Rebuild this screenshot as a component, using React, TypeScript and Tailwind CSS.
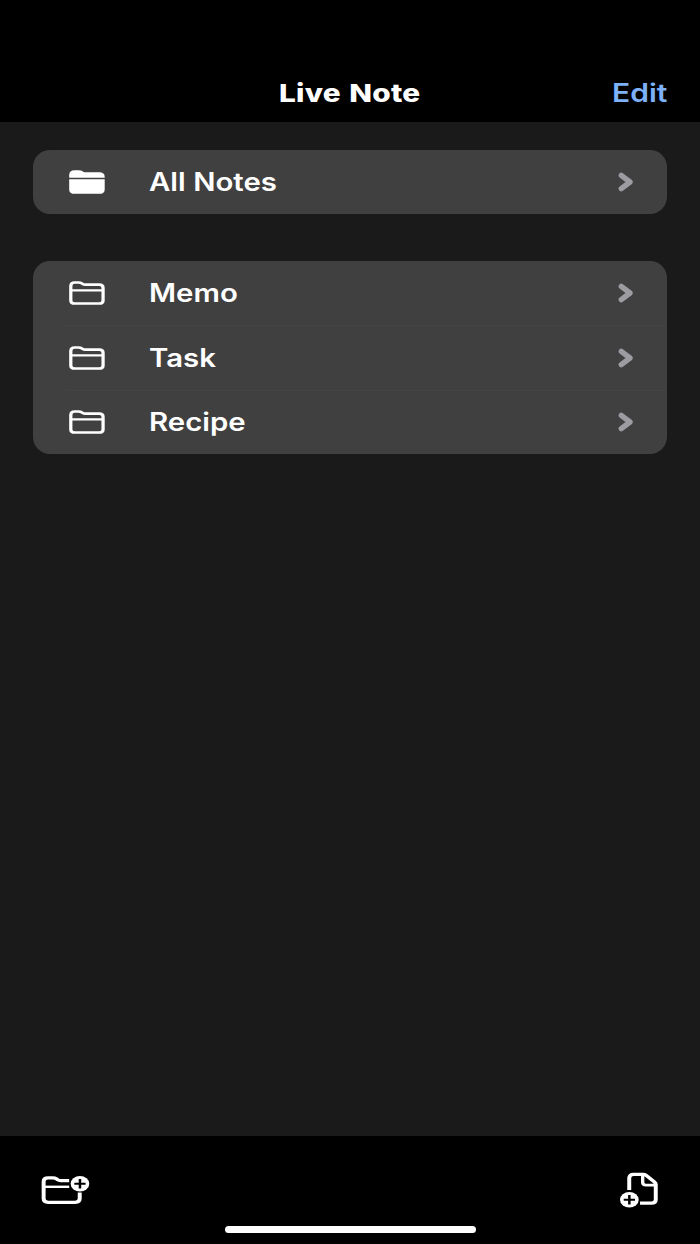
import { ReactNode } from "react"

interface NoteFolder {
    name: string
    filled?: boolean
}

const allNotes: NoteFolder[] = [{ name: "All Notes", filled: true }]
const folders: NoteFolder[] = [{ name: "Memo" }, { name: "Task" }, { name: "Recipe" }]

const FOLDER_PATH =
    "M1.5 4.9Q1.5 1.5 4.7 1.5H8Q9.6 1.5 10.5 2.3L11.4 3Q12.3 3.7 13.8 3.7H25.3Q28.4 3.7 28.4 6.9V19.4Q28.4 22.5 25.3 22.5H4.7Q1.5 22.5 1.5 19.4Z"

function FolderIcon({ filled }: { filled?: boolean }) {
    return (
        <svg viewBox="0 0 30 24" preserveAspectRatio="none" className="h-6 w-9 shrink-0" fill="none" stroke="white" strokeWidth="2.7">
            <path d={FOLDER_PATH} fill={filled ? "white" : "none"} />
            {filled
                ? <path d="M0 8.5H30" stroke="#404040" strokeWidth="1.3" />
                : <path d="M1.5 9.4H28.4" strokeWidth="2.2" />}
        </svg>
    )
}

function ChevronIcon() {
    return (
        <svg viewBox="0 0 16 20" className="h-5 w-4 shrink-0" fill="none" stroke="#9c9ca1" strokeWidth="5.4" strokeLinecap="round" strokeLinejoin="round">
            <path d="M3.3 3.3L12 10L3.3 16.7" />
        </svg>
    )
}

function NewFolderIcon() {
    return (
        <svg viewBox="0 0 41 30" preserveAspectRatio="none" className="h-[30px] w-[49px]" fill="none" stroke="white" strokeWidth="3.3">
            <path d="M23.6 5.6H16.5Q14.9 5.6 13.8 4.6L12.8 3.8Q11.6 2.8 10 2.8H6Q2.2 2.8 2.2 6.6V23.6Q2.2 27.4 6 27.4H28.6Q32.4 27.4 32.4 23.6V17.6" />
            <path d="M2.2 11.8H23.6" strokeWidth="2.4" />
            <circle cx="32.6" cy="8.7" r="7.8" fill="white" stroke="none" />
            <path d="M27.9 8.7H37.3M32.6 4V13.4" stroke="black" strokeWidth="2.1" />
        </svg>
    )
}

function NewNoteIcon() {
    return (
        <svg viewBox="0 0 32.5 36" preserveAspectRatio="none" className="h-9 w-[39px]" fill="none" stroke="white" strokeWidth="3.3">
            <path d="M7.7 18V6.1Q7.7 2.4 11.4 2.4H19.2Q20.7 2.4 21.8 3.4L28.6 9.9Q29.8 11 29.8 12.6V27.4Q29.8 31.1 26.1 31.1H16.7" />
            <path d="M18.9 2.4V10.2Q18.9 13.2 21.9 13.2H29.8" strokeWidth="2.8" />
            <circle cx="7.8" cy="27.7" r="7.8" fill="white" stroke="none" />
            <path d="M3.1 27.7H12.5M7.8 23V32.4" stroke="black" strokeWidth="2.1" />
        </svg>
    )
}

function FolderRow({ folder, divider }: { folder: NoteFolder, divider: boolean }) {
    return (
        <div className="pl-8">
            <div className={`flex items-center pl-1 pr-[33px] ${divider ? "h-[64.5px] border-t border-[#444444]" : "h-16"}`}>
                <FolderIcon filled={folder.filled} />
                <span className="ml-[43.5px] flex-1 origin-left scale-x-[1.175] whitespace-nowrap text-[25px] font-semibold leading-8">
                    {folder.name}
                </span>
                <ChevronIcon />
            </div>
        </div>
    )
}

function FolderList({ items }: { items: NoteFolder[] }) {
    return (
        <div className="overflow-hidden rounded-[17px] bg-[#404040]">
            {items.map((folder, index) => (
                <FolderRow key={folder.name} folder={folder} divider={index > 0} />
            ))}
        </div>
    )
}

function IconButton({ label, children }: { label: string, children: ReactNode }) {
    return <button aria-label={label}>{children}</button>
}

export default function App() {
    return (
        <div className="flex h-[1244px] w-[700px] flex-col bg-[#1a1a1a] font-['Inter',sans-serif] text-white">
            <header className="grid h-[122px] grid-cols-3 items-end bg-black px-[33px] pb-[13px] text-[25px] leading-8">
                <h1 className="col-start-2 scale-x-[1.19] whitespace-nowrap text-center font-extrabold tracking-[0.2px] [word-spacing:1.5px]">Live Note</h1>
                <button className="origin-right scale-x-[1.2] text-right font-semibold text-[#7db1fa]">Edit</button>
            </header>
            <main className="flex flex-1 flex-col gap-[47.5px] px-[33px] pt-[27.5px]">
                <FolderList items={allNotes} />
                <FolderList items={folders} />
            </main>
            <footer className="flex h-[108px] flex-col justify-between bg-black pb-[11px] pt-9">
                <div className="flex items-start justify-between px-[41px]">
                    <div className="pt-[3px]">
                        <IconButton label="New folder"><NewFolderIcon /></IconButton>
                    </div>
                    <IconButton label="New note"><NewNoteIcon /></IconButton>
                </div>
                <div className="h-[7px] w-[251px] shrink-0 self-center rounded-full bg-white" />
            </footer>
        </div>
    )
}
